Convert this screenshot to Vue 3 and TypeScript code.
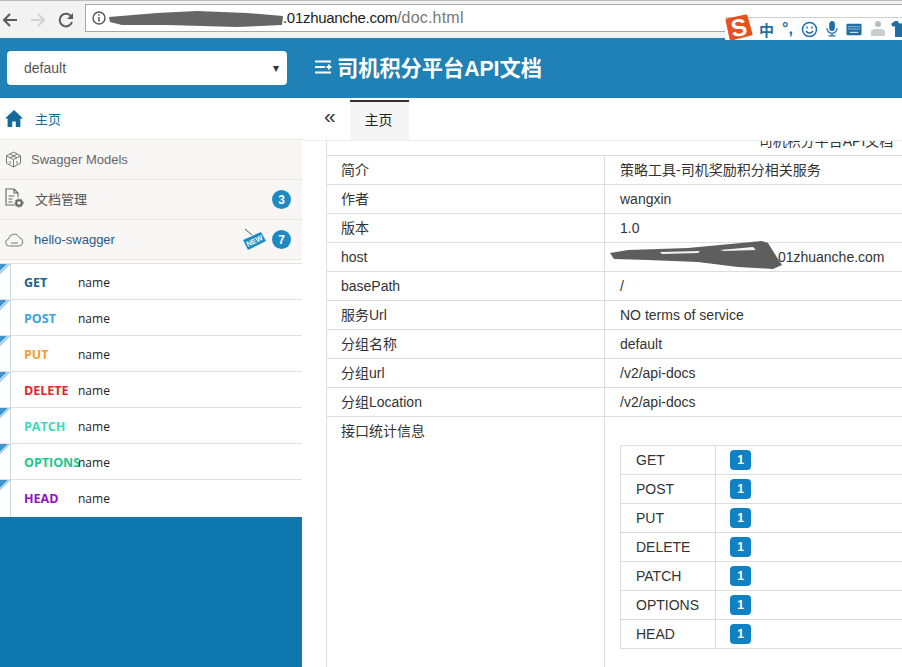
<script setup lang="ts">
const methods = [
  { m: 'GET', c: '#13658f' },
  { m: 'POST', c: '#37a6dc' },
  { m: 'PUT', c: '#eda12f' },
  { m: 'DELETE', c: '#e8222c' },
  { m: 'PATCH', c: '#37dcc0' },
  { m: 'OPTIONS', c: '#18c88f' },
  { m: 'HEAD', c: '#8f10c8' },
]
const info = [
  ['简介', '策略工具-司机奖励积分相关服务'],
  ['作者', 'wangxin'],
  ['版本', '1.0'],
  ['host', '.01zhuanche.com'],
  ['basePath', '/'],
  ['服务Url', 'NO terms of service'],
  ['分组名称', 'default'],
  ['分组url', '/v2/api-docs'],
  ['分组Location', '/v2/api-docs'],
]
</script>

<template>
  <div class="page">
    <div class="browser">
      <svg width="18" height="18" viewBox="0 0 18 18"><path d="M16 9H3M9 3 3 9l6 6" fill="none" stroke="#5a5a5a" stroke-width="2"/></svg>
      <svg width="18" height="18" viewBox="0 0 18 18"><path d="M2 9h13M9 3l6 6-6 6" fill="none" stroke="#d2d2d2" stroke-width="2"/></svg>
      <svg width="18" height="18" viewBox="0 0 18 18"><path d="M14.500 6A6.300 6.300 0 1 0 15 11" fill="none" stroke="#5a5a5a" stroke-width="2"/><path d="M16 2v6h-6z" fill="#5a5a5a"/></svg>
      <div class="address">
        <svg width="14" height="14" viewBox="0 0 14 14"><circle cx="7" cy="7" r="6" fill="none" stroke="#555" stroke-width="1.400"/><path d="M7 6v4.500M7 3.200v1.600" stroke="#555" stroke-width="1.500"/></svg>
        <span class="url"><span class="redacted"></span><span class="host-part">.01zhuanche.com</span><span class="path-part">/doc.html</span></span>
      </div>
    </div>

    <header class="topbar">
      <div class="select">
        <span>default</span>
        <span class="caret">▾</span>
      </div>
      <div class="title">
        <svg width="18" height="14" viewBox="0 0 18 14"><path d="M1 1.500h16M1 7h10M12.500 7h5M15 4.500v5M1 12.500h16" stroke="#fff" stroke-width="2" fill="none"/></svg>
        <span>司机积分平台API文档</span>
      </div>
    </header>

    <div class="main">
      <aside class="side">
        <div class="menu">
          <div class="item home">
            <svg width="18" height="17" viewBox="0 0 18 17"><path d="M9 0 0 8.500h2.600V17h4.600v-5.500h3.600V17h4.600V8.500H18z" fill="#13699b"/></svg>
            <span>主页</span>
          </div>
          <div class="item">
            <svg width="17" height="17" viewBox="0 0 17 17" fill="none" stroke="#777" stroke-width="1"><path d="M8.500 1 15.500 4.800v7.400L8.500 16 1.500 12.200V4.800z"/><path d="M1.500 4.800 8.500 8.500l7-3.700M8.500 8.500V16M5 3l7 4M12 3 5 7M5 10v3M12 10v3"/></svg>
            <span class="models">Swagger Models</span>
          </div>
          <div class="item">
            <svg class="doc-icon" width="19" height="20" viewBox="0 0 19 20" fill="none" stroke="#666" stroke-width="1.100"><path d="M10 17H1V1h8l4 4v4M9 1v4h4M3.500 8h6M3.500 11h4M3.500 14h4"/><circle cx="14" cy="15" r="2.800" stroke-width="2"/><circle cx="14" cy="15" r="4.200" stroke-width="1" stroke-dasharray="1.500 1.500"/></svg>
            <span class="docs">文档管理</span>
            <b class="count">3</b>
          </div>
          <div class="item">
            <svg width="19" height="14" viewBox="0 0 19 14" fill="none" stroke="#777" stroke-width="1"><path d="M4.500 13H4a3.500 3.500 0 0 1-.6-6.900A5.800 5.800 0 0 1 14.500 4.800 4.200 4.200 0 0 1 14.500 13z"/><path d="M6 10h7"/></svg>
            <span class="hello">hello-swagger</span>
            <svg class="new" width="25" height="24" viewBox="0 0 25 24">
              <path d="M3 1 10 7" stroke="#555" stroke-width="1" fill="none"/>
              <path d="M1 12 19 4 24 13 6 22z" fill="#1a8cc2"/>
              <text x="12.500" y="15.500" text-anchor="middle" transform="rotate(-25 12.500 13)" class="new-text">NEW</text>
            </svg>
            <b class="count">7</b>
          </div>
        </div>
        <div class="rows">
          <div v-for="r in methods" :key="r.m" class="row">
            <i class="corner"></i>
            <span class="method" :style="{ color: r.c }">{{ r.m }}</span>
            <span class="name">name</span>
          </div>
        </div>
      </aside>

      <section class="content">
        <div class="tabs">
          <span class="collapse">«</span>
          <div class="tab">主页</div>
        </div>
        <div class="doc">
          <div class="doc-title">司机积分平台API文档</div>
          <div class="table">
            <div v-for="row in info" :key="row[0]" class="tr">
              <div class="th">{{ row[0] }}</div>
              <div class="td" :class="{ 'host-cell': row[0] === 'host' }">{{ row[1] }}</div>
            </div>
            <div class="tr stat">
              <div class="th">接口统计信息</div>
              <div class="td">
                <div class="inner">
                  <div v-for="r in methods" :key="r.m" class="itr">
                    <div class="ith">{{ r.m }}</div>
                    <div class="itd"><b class="badge">1</b></div>
                  </div>
                </div>
              </div>
            </div>
          </div>
        </div>
      </section>
    </div>

    <svg class="scribble s1" width="178" height="18" viewBox="0 0 178 18"><path d="M2 7 50 3 90 1 140 3 176 6 175 15 130 17 60 15 15 15 3 12z" fill="#666"/></svg>
    <svg class="scribble s2" width="176" height="30" viewBox="0 0 176 30"><path d="M2 12 20 9 80 7 154 0 160 2 170 18 174 24 165 28 130 26 90 21 40 19 6 18z" fill="#5e5e5e"/><path d="M52 11 92 10 90 12 54 13zM112 9 145 6 148 9 116 10z" fill="#f4f4f4"/></svg>

    <div class="ime">
      <svg class="logo" width="28" height="28" viewBox="0 0 28 28"><path d="M2 6 21 2 26 20 6 25z" fill="#e8501f" stroke="#e8501f" stroke-width="3" stroke-linejoin="round"/><text x="14" y="22" text-anchor="middle" class="logo-s" transform="rotate(-10 14 14)">S</text></svg>
      <span class="zh">中</span>
      <span class="punc">°,</span>
      <svg width="17" height="17" viewBox="0 0 17 17" fill="none" stroke="#1f6fa5" stroke-width="1.500"><circle cx="8.500" cy="8.500" r="7"/><path d="M5 10c1.500 2.500 5.500 2.500 7 0M6 5.500v2M11 5.500v2"/></svg>
      <svg width="12" height="18" viewBox="0 0 14 18" fill="none" stroke="#1f6fa5" stroke-width="1.500"><rect x="4.500" y="0.500" width="5" height="10" rx="2.500" fill="#1f6fa5"/><path d="M1 8a6 6 0 0 0 12 0M7 14v3M3 17h8"/></svg>
      <svg width="16" height="13" viewBox="0 0 17 13"><rect x="0.500" y="0.500" width="16" height="12" rx="1" fill="#1f6fa5"/><path d="M2.500 3.500h12M2.500 6h12" stroke="#fff" stroke-dasharray="1.200 1"/><path d="M4 9.500h9" stroke="#fff"/></svg>
      <svg width="17" height="18" viewBox="0 0 17 18"><circle cx="8" cy="4" r="3" fill="#b9bcc0"/><path d="M1 11c1-3 12-3 14 0v5H1z" fill="#c9ccd0"/></svg>
      <svg class="shirt" width="15" height="16" viewBox="0 0 15 16"><path d="M4 0 0 3l2 3 2-1v11h11V0h-3a2.500 2.500 0 0 1-5 0z" fill="#1f6fa5"/></svg>
    </div>
  </div>
</template>

<style scoped>
.page {
  position: relative;
  width: 902px;
  height: 667px;
  overflow: hidden;
  background: #fff;
  font-family: "Liberation Sans", "Noto Sans CJK SC", sans-serif;
  color: #333;
  font-size: 14px;
}
.browser {
  height: 38px;
  box-sizing: border-box;
  background: #f2f2f2;
  border-top: 1px solid #bdbdbd;
  display: flex;
  align-items: center;
  padding: 0 0 0 1px;
  gap: 10px;
}
.address {
  flex: 1;
  height: 28px;
  margin-top: -4px;
  box-sizing: border-box;
  background: #fff;
  border: 1px solid #a9a9a9;
  border-right: none;
  display: flex;
  align-items: center;
  padding-left: 6px;
  gap: 3px;
}
.url { white-space: nowrap; display: flex; align-items: center; }
.redacted { display: inline-block; width: 174px; }
.host-part { color: #222; font-size: 15px; letter-spacing: -0.3px; }
.path-part { color: #777; font-size: 16px; letter-spacing: 0.2px; }
.topbar {
  height: 60px;
  background: #1f81b5;
  display: flex;
  align-items: center;
}
.select {
  width: 280px;
  height: 34px;
  margin-left: 7px;
  box-sizing: border-box;
  background: #fff;
  border-radius: 4px;
  padding: 0 8px 0 17px;
  display: flex;
  align-items: center;
  justify-content: space-between;
  color: #555;
}
.caret { font-size: 12px; color: #333; }
.title {
  margin: -3px 0 0 27px;
  display: flex;
  align-items: center;
  gap: 5px;
  color: #fff;
  font-size: 21.200px;
  font-weight: 700;
}
.main { display: flex; height: 569px; }
.side {
  width: 302px;
  flex: none;
  background: #0f78b0;
  display: flex;
  flex-direction: column;
}
.menu { background: #fff; padding-bottom: 3px; }
.item {
  height: 40px;
  box-sizing: border-box;
  display: flex;
  align-items: center;
  padding: 0 11px 0 5px;
  background: #f9f7f6;
  border-bottom: 1px solid #e9e7e6;
  color: #555;
  font-size: 13px;
}
.item.home {
  height: 42px;
  background: #fff;
  color: #13699b;
}
.home span { margin-left: 12px; }
.models { margin-left: 9px; color: #666; }
.doc-icon { margin-top: -3px; }
.docs { margin: -3px 0 0 11px; flex: 1; }
.hello { margin-left: 10px; flex: 1; color: #2b5a85; }
.new { margin-right: 5px; }
.new-text { font: 700 7.500px "Liberation Sans", sans-serif; fill: #fff; }
.count {
  width: 19px;
  height: 19px;
  border-radius: 50%;
  background: #1f8ac2;
  color: #fff;
  font-size: 12px;
  display: flex;
  align-items: center;
  justify-content: center;
}
.rows { background: #fff; }
.row {
  position: relative;
  height: 36px;
  box-sizing: border-box;
  border-top: 1px solid #e0e0e0;
  display: flex;
  align-items: center;
  padding: 1px 0 0 24px;
}
.row::before {
  content: "";
  position: absolute;
  left: 10px;
  top: 0;
  bottom: 0;
  width: 1px;
  background: #c9d7e0;
}
.row:last-child { height: 38px; padding-bottom: 2px; }
.corner {
  position: absolute;
  left: 0;
  top: 0;
  width: 10px;
  height: 10px;
  background: linear-gradient(135deg, #3f94cf 0 35%, #a9d3ee 35% 48%, #4fa3d8 48% 100%);
  clip-path: polygon(0 100%, 100% 0, 0 0);
}
.method {
  width: 54px;
  flex: none;
  font: 700 12.500px "Open Sans", sans-serif;
  white-space: nowrap;
}
.name { font: 12px "Open Sans", sans-serif; color: #222; }
.content { flex: 1; min-width: 0; display: flex; flex-direction: column; }
.tabs {
  height: 43px;
  box-sizing: border-box;
  border-bottom: 1px solid #eee;
  display: flex;
  padding: 2px 0 0 22px;
  flex: none;
}
.collapse {
  width: 26px;
  font-size: 21px;
  line-height: 32px;
  color: #333;
}
.tab {
  width: 59px;
  background: #f6f5f5;
  border-top: 2px solid #3a2c2c;
  box-sizing: border-box;
  text-align: center;
  line-height: 36px;
  color: #222;
  padding-right: 2px;
}
.doc {
  margin-left: 24px;
  border-left: 1px solid #ddd;
  flex: 1;
  min-height: 0;
  overflow: hidden;
}
.doc-title {
  width: 998px;
  height: 14px;
  overflow: hidden;
  line-height: 0;
  text-align: center;
  color: #333;
}
.table { width: 620px; border-top: 1px solid #ddd; }
.tr { display: flex; min-height: 28px; border-bottom: 1px solid #ddd; }
.th {
  width: 278px;
  flex: none;
  box-sizing: border-box;
  padding-left: 14px;
  line-height: 28px;
  border-right: 1px solid #ddd;
  color: #333;
}
.td { flex: 1; padding-left: 15px; line-height: 28px; color: #333; }
.host-cell { padding-left: 169px; }
.stat { border-bottom: none; }
.inner {
  margin: 28px 0 40px;
  width: 400px;
  border-top: 1px solid #ddd;
  border-left: 1px solid #ddd;
}
.itr { display: flex; height: 29px; box-sizing: border-box; border-bottom: 1px solid #ddd; }
.ith {
  width: 95px;
  box-sizing: border-box;
  padding-left: 15px;
  border-right: 1px solid #ddd;
  line-height: 28px;
}
.itd { padding-left: 14px; display: flex; align-items: center; }
.badge {
  width: 21px;
  height: 20px;
  border-radius: 4px;
  background: #1082c4;
  color: #fff;
  font-size: 12px;
  display: flex;
  align-items: center;
  justify-content: center;
}
.scribble { position: absolute; }
.s1 { left: 107px; top: 10px; }
.s2 { left: 608px; top: 241px; }
.ime {
  position: absolute;
  left: 725px;
  top: 17px;
  width: 177px;
  height: 23px;
  box-sizing: border-box;
  background: #fff;
  border-top: 1px solid #cfcfcf;
  display: flex;
  align-items: center;
  color: #1f6fa5;
  white-space: nowrap;
}
.ime > * { flex: none; }
.ime > * + * { margin-left: 8px; }
.logo { margin-top: -3px; }
.logo-s { font: 700 24px "Liberation Sans", sans-serif; fill: #fff; }
.ime > .zh { font-size: 15px; font-weight: 700; margin-left: 6px; }
.punc { font-size: 16px; font-weight: 700; width: 11px; }
.ime > .shirt { margin-left: 4px; }
</style>
